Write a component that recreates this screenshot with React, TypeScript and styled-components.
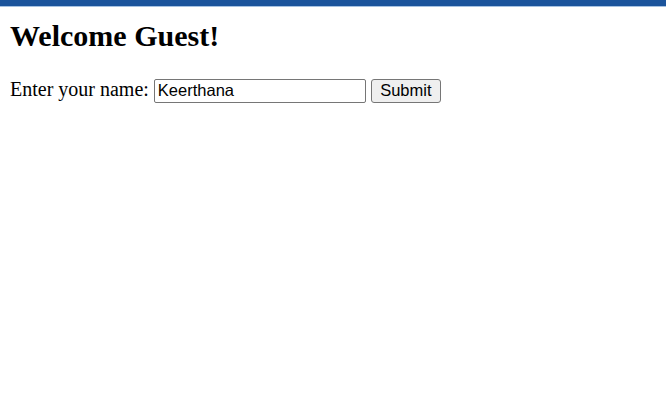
import React, { useState } from 'react';
import styled, { createGlobalStyle } from 'styled-components';

const GlobalStyle = createGlobalStyle`
    html, body {
        margin: 0;
        padding: 0;
        background: #fff;
        color: #000;
        font-family: "Liberation Serif", "Times New Roman", serif;
    }
`;

export default function App() {
    const [name, setName] = useState('Keerthana');
    const [greeted, setGreeted] = useState('Guest');

    const handleSubmit = (e: React.FormEvent) => {
        e.preventDefault();
        setGreeted(name || 'Guest');
    };

    return (
        <>
            <GlobalStyle />
            <TopBar />
            <Page>
                <Title>Welcome {greeted}!</Title>
                <Form onSubmit={handleSubmit}>
                    <Label htmlFor="name">Enter your name:</Label>{' '}
                    <NameInput
                        id="name"
                        type="text"
                        value={name}
                        onChange={(e) => setName(e.target.value)}
                    />{' '}
                    <SubmitButton type="submit">Submit</SubmitButton>
                </Form>
            </Page>
        </>
    );
}

const TopBar = styled.div`
    height: 6px;
    background: #1b549c;
    border-bottom: 1px solid #a6c2e2;
`;

const Page = styled.div`
    padding: 0 10px;
`;

const Title = styled.h1`
    font-size: 30px;
    font-weight: bold;
    line-height: 34px;
    margin: 12px 0 0;
`;

const Form = styled.form`
    margin-top: 24px;
    font-size: 20px;
    line-height: 24px;
`;

const Label = styled.label`
    font-size: 20px;
`;

const NameInput = styled.input`
    box-sizing: border-box;
    width: 212px;
    height: 24px;
    padding: 1px 3px;
    border: 1px solid #767676;
    border-radius: 2px;
    font-family: "Liberation Sans", Arial, sans-serif;
    font-size: 16.5px;
    color: #000;
    vertical-align: baseline;
`;

const SubmitButton = styled.button`
    box-sizing: border-box;
    width: 70px;
    height: 24px;
    padding: 0 6px;
    background: #efefef;
    border: 1px solid #767676;
    border-radius: 3px;
    font-family: "Liberation Sans", Arial, sans-serif;
    font-size: 16.5px;
    color: #000;
`;
